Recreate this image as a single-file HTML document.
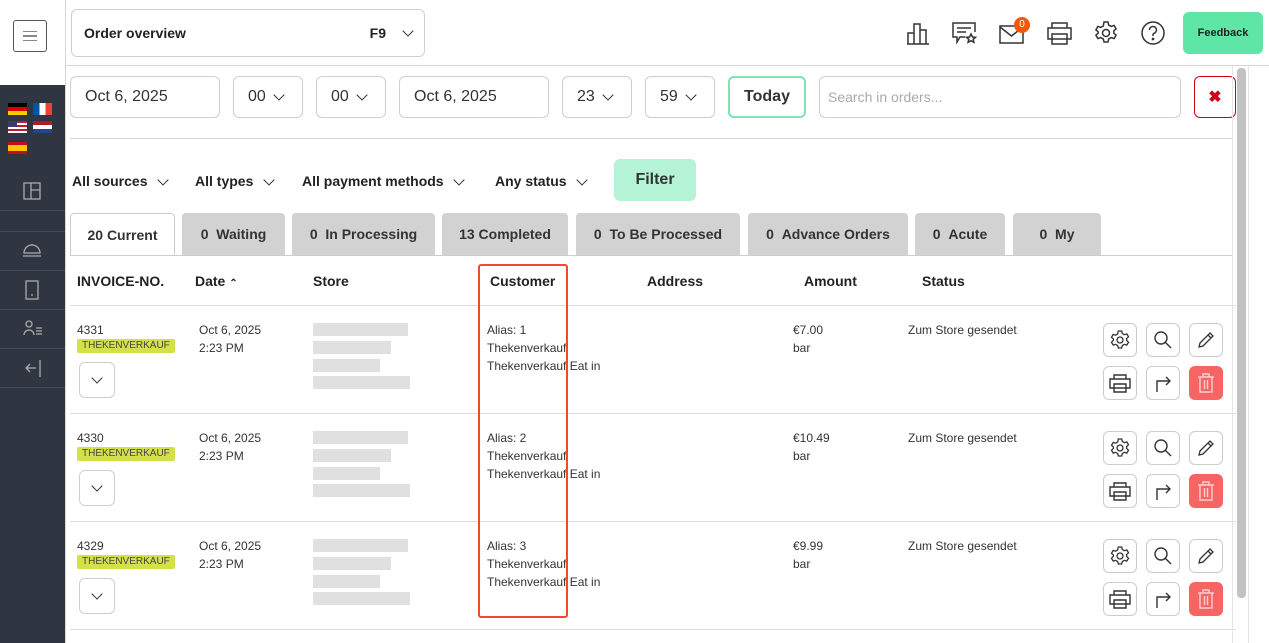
<!DOCTYPE html>
<html><head><meta charset="utf-8"><style>
*{box-sizing:border-box;margin:0;padding:0}
body{width:1269px;height:643px;overflow:hidden;background:#fff;font-family:"Liberation Sans",sans-serif;color:#222;position:relative}
.a{position:absolute}
.side{left:0;top:85px;width:65px;height:558px;background:#2f3541}
.vl{left:65px;top:0;width:1px;height:643px;background:#d6d6d6}
.box{position:absolute;border:1px solid #cfcfcf;border-radius:6px;background:#fff}
.chev{display:inline-block;width:8px;height:8px;border-right:1.6px solid #333;border-bottom:1.6px solid #333;transform:rotate(45deg)}
.inp{font-size:16px;color:#333;display:flex;align-items:center;padding-left:14px}
.flt{font-size:14px;font-weight:bold;top:173px}
.tab{position:absolute;top:213px;height:42px;background:#d2d2d2;border-radius:4px 4px 0 0;font-size:14px;font-weight:bold;display:flex;align-items:center;justify-content:center;color:#333}
.th{position:absolute;top:273px;font-size:14px;font-weight:bold;color:#222}
.hr{position:absolute;left:66px;width:1166px;height:1px;background:#dcdcdc}
.t{position:absolute;font-size:12px;line-height:18px;color:#333}
.tag{position:absolute;background:#d4e04a;color:#444;font-size:10px;padding:0 5px;height:14px;line-height:14px;border-radius:2px}
.ph{position:absolute;background:#e0e0e0;height:13px}
.btn{position:absolute;width:34px;height:34px;border:1px solid #ccc;border-radius:6px;background:#fff;display:flex;align-items:center;justify-content:center}
.del{background:#f76464;border-color:#f76464}
.sb{position:absolute;width:1px;background:#ddd}
.ic{position:absolute;top:13px}
</style></head><body>
<div class="a side"></div>
<div class="a" style="left:0;top:210px;width:65px;height:1px;background:#444b57"></div>
<div class="a" style="left:0;top:231px;width:65px;height:1px;background:#444b57"></div>
<div class="a" style="left:0;top:270px;width:65px;height:1px;background:#444b57"></div>
<div class="a" style="left:0;top:309px;width:65px;height:1px;background:#444b57"></div>
<div class="a" style="left:0;top:348px;width:65px;height:1px;background:#444b57"></div>
<div class="a" style="left:0;top:387px;width:65px;height:1px;background:#444b57"></div>
<div class="a vl"></div>
<div class="box" style="left:13px;top:20px;width:34px;height:32px;border-color:#555;border-radius:3px;display:flex;flex-direction:column;justify-content:center;align-items:center;gap:3px"><i style="display:block;width:14px;height:1.5px;background:#888"></i><i style="display:block;width:14px;height:1.5px;background:#888"></i><i style="display:block;width:14px;height:1.5px;background:#888"></i></div>
<!-- flags -->
<div class="a" style="left:8px;top:103px;width:19px;height:12px;background:linear-gradient(#000 33%,#d00 33% 66%,#fc0 66%)"></div>
<div class="a" style="left:33px;top:103px;width:19px;height:12px;background:linear-gradient(90deg,#0055a4 33%,#fff 33% 66%,#ef4135 66%)"></div>
<div class="a" style="left:8px;top:121px;width:19px;height:12px;background:repeating-linear-gradient(#b22234 0 2px,#fff 2px 4px)"><div style="width:9px;height:6px;background:#3c3b6e"></div></div>
<div class="a" style="left:33px;top:121px;width:19px;height:12px;background:linear-gradient(#ae1c28 33%,#fff 33% 66%,#21468b 66%)"></div>
<div class="a" style="left:8px;top:142px;width:19px;height:12px;background:linear-gradient(#c60b1e 25%,#ffc400 25% 75%,#c60b1e 75%)"></div>
<svg class="a" style="left:23px;top:182px" width="19" height="19" fill="none" stroke="#aaa" stroke-width="1.3"><rect x="1" y="1" width="16" height="16"/><path d="M8 1v16M8 8h9"/></svg>
<svg class="a" style="left:22px;top:241px" width="20" height="18" fill="none" stroke="#aaa" stroke-width="1.3"><path d="M2 12a8 8 0 0 1 16 0zM1 15h18M10 3v1"/></svg>
<svg class="a" style="left:25px;top:280px" width="14" height="20" fill="none" stroke="#aaa" stroke-width="1.3"><rect x="1" y="1" width="12" height="18"/><path d="M6 15h2"/></svg>
<svg class="a" style="left:23px;top:320px" width="20" height="16" fill="none" stroke="#aaa" stroke-width="1.3"><circle cx="6" cy="4" r="3"/><path d="M1 15a5 5 0 0 1 10 0M13 8h6M13 11h6M13 14h6"/></svg>
<svg class="a" style="left:24px;top:359px" width="18" height="19" fill="none" stroke="#aaa" stroke-width="1.3"><path d="M16 1v17M12 9H2M6 5L2 9l4 4"/></svg>

<!-- header -->
<div class="box" style="left:71px;top:9px;width:354px;height:48px;display:flex;align-items:center;padding:0 12px;font-size:14px;font-weight:bold"><span style="flex:1">Order overview</span><span style="margin-right:18px">F9</span><span class="chev" style="margin-top:-5px"></span></div>
<div class="a" style="left:66px;top:65px;width:1203px;height:1px;background:#d6d6d6"></div>
<svg class="a" style="left:906px;top:22px" width="24" height="23" fill="none" stroke="#333" stroke-width="1.5"><path d="M1 22h22M2 22V11h6v11M8 22V2h6v20M14 22V8h6v14"/></svg>
<svg class="a" style="left:952px;top:21px" width="26" height="24" fill="none" stroke="#333" stroke-width="1.5"><path d="M13 16H8l-3 5v-5H1V2h22v9M5 7h14M5 11h9"/><path d="M19 13l1.5 3 3 .3-2.3 2 .7 3-2.9-1.6-2.9 1.6.7-3-2.3-2 3-.3z"/></svg>
<svg class="a" style="left:999px;top:24px" width="26" height="20" fill="none" stroke="#333" stroke-width="1.5"><rect x="1" y="2" width="23" height="17"/><path d="M1 3l11.5 9L24 3"/></svg>
<div class="a" style="left:1014px;top:17px;width:16px;height:16px;border-radius:50%;background:#f05a0c;color:#fff;font-size:10px;text-align:center;line-height:16px">0</div>
<svg class="a" style="left:1047px;top:21px" width="25" height="24" fill="none" stroke="#333" stroke-width="1.5"><path d="M5 7V2h15v5M1 7h23v11H1zM5 13h15v10H5z"/></svg>
<svg class="a" style="left:1094px;top:21px" width="24" height="24" fill="none" stroke="#333" stroke-width="1.5"><circle cx="12" cy="12" r="3.5"/><path d="M10 1h4l.7 3 2.5 1.4 2.9-1 2 3.4-2.3 2v2.4l2.3 2-2 3.4-2.9-1-2.5 1.4-.7 3h-4l-.7-3-2.5-1.4-2.9 1-2-3.4 2.3-2V10.8l-2.3-2 2-3.4 2.9 1 2.5-1.4z"/></svg>
<svg class="a" style="left:1141px;top:21px" width="24" height="24" fill="none" stroke="#333" stroke-width="1.5"><circle cx="12" cy="12" r="11"/><path d="M8.5 9a3.5 3.5 0 1 1 4.5 3.3c-.7.3-1 .8-1 1.7v1"/><circle cx="12" cy="18" r=".6" fill="#333"/></svg>
<div class="a" style="left:1183px;top:12px;width:80px;height:42px;background:#5ee6a6;border-radius:6px;font-size:11px;font-weight:bold;display:flex;align-items:center;justify-content:center;color:#222">Feedback</div>

<!-- date row -->
<div class="box inp" style="left:70px;top:76px;width:150px;height:42px">Oct 6, 2025</div>
<div class="box inp" style="left:233px;top:76px;width:70px;height:42px">00&nbsp;&nbsp;<span class="chev" style="margin-top:-5px"></span></div>
<div class="box inp" style="left:316px;top:76px;width:70px;height:42px">00&nbsp;&nbsp;<span class="chev" style="margin-top:-5px"></span></div>
<div class="box inp" style="left:399px;top:76px;width:150px;height:42px">Oct 6, 2025</div>
<div class="box inp" style="left:562px;top:76px;width:70px;height:42px">23&nbsp;&nbsp;<span class="chev" style="margin-top:-5px"></span></div>
<div class="box inp" style="left:645px;top:76px;width:70px;height:42px">59&nbsp;&nbsp;<span class="chev" style="margin-top:-5px"></span></div>
<div class="box" style="left:728px;top:76px;width:78px;height:42px;border:2px solid #7fe3b5;font-size:16px;font-weight:bold;display:flex;align-items:center;justify-content:center;color:#333">Today</div>
<div class="box" style="left:819px;top:76px;width:362px;height:42px;font-size:14px;color:#aaa;padding:12px 0 0 8px">Search in orders...</div>
<div class="box" style="left:1194px;top:76px;width:42px;height:42px;border-color:#d0021b;color:#d0021b;font-size:16px;font-weight:bold;display:flex;align-items:center;justify-content:center">✖</div>
<div class="a" style="left:70px;top:138px;width:1162px;height:1px;background:#d6d6d6"></div>

<!-- filters -->
<div class="a flt" style="left:72px">All sources &nbsp;&nbsp;<span class="chev" style="margin-bottom:2px"></span></div>
<div class="a flt" style="left:195px">All types &nbsp;&nbsp;<span class="chev" style="margin-bottom:2px"></span></div>
<div class="a flt" style="left:302px">All payment methods &nbsp;&nbsp;<span class="chev" style="margin-bottom:2px"></span></div>
<div class="a flt" style="left:495px">Any status &nbsp;&nbsp;<span class="chev" style="margin-bottom:2px"></span></div>
<div class="a" style="left:614px;top:159px;width:82px;height:42px;background:#b5f3d6;border-radius:6px;font-size:16px;font-weight:bold;display:flex;align-items:center;justify-content:center;color:#333">Filter</div>

<!-- tabs -->
<div class="tab" style="left:70px;width:105px;background:#fff;border:1px solid #ccc;border-bottom:none">20 Current</div>
<div class="tab" style="left:182px;width:103px">0&nbsp;&nbsp;Waiting</div>
<div class="tab" style="left:292px;width:143px">0&nbsp;&nbsp;In Processing</div>
<div class="tab" style="left:442px;width:126px">13&nbsp;Completed</div>
<div class="tab" style="left:576px;width:164px">0&nbsp;&nbsp;To Be Processed</div>
<div class="tab" style="left:748px;width:160px">0&nbsp;&nbsp;Advance Orders</div>
<div class="tab" style="left:915px;width:90px">0&nbsp;&nbsp;Acute</div>
<div class="tab" style="left:1013px;width:88px">0&nbsp;&nbsp;My</div>
<div class="hr" style="top:255px;left:70px;width:1162px;background:#ccc"></div>

<!-- table head -->
<div class="th" style="left:77px">INVOICE-NO.</div>
<div class="th" style="left:195px">Date <span style="font-size:10px">&#8963;</span></div>
<div class="th" style="left:313px">Store</div>
<div class="th" style="left:490px">Customer</div>
<div class="th" style="left:647px">Address</div>
<div class="th" style="left:804px">Amount</div>
<div class="th" style="left:922px">Status</div>
<div class="hr" style="top:305px;left:70px"></div>
<div class="hr" style="top:413px;left:70px"></div>
<div class="hr" style="top:521px;left:70px"></div>
<div class="hr" style="top:629px;left:70px"></div>

<!-- rows -->
<div id="rows"></div>
<script>
var d=[["4331","1","€7.00"],["4330","2","€10.49"],["4329","3","€9.99"]];
var h="";
d.forEach(function(r,i){var y=321+i*108;
h+='<div class="t" style="left:77px;top:'+y+'px">'+r[0]+'</div>';
h+='<div class="tag" style="left:77px;top:'+(y+18)+'px">THEKENVERKAUF</div>';
h+='<div class="box" style="left:79px;top:'+(y+41)+'px;width:36px;height:36px;display:flex;align-items:center;justify-content:center"><span class="chev" style="margin-top:-4px"></span></div>';
h+='<div class="t" style="left:199px;top:'+y+'px">Oct 6, 2025<br>2:23 PM</div>';
h+='<div class="ph" style="left:313px;top:'+(y+2)+'px;width:95px"></div><div class="ph" style="left:313px;top:'+(y+20)+'px;width:78px"></div><div class="ph" style="left:313px;top:'+(y+38)+'px;width:67px"></div><div class="ph" style="left:313px;top:'+(y+55)+'px;width:97px"></div>';
h+='<div class="t" style="left:487px;top:'+y+'px">Alias: '+r[1]+'<br>Thekenverkauf<br>Thekenverkauf Eat in</div>';
h+='<div class="t" style="left:793px;top:'+y+'px">'+r[2]+'<br>bar</div>';
h+='<div class="t" style="left:908px;top:'+y+'px">Zum Store gesendet</div>';
var b1=y+2,b2=y+45;
h+='<div class="btn" style="left:1103px;top:'+b1+'px"><svg width="20" height="20" fill="none" stroke="#333" stroke-width="1.3"><circle cx="10" cy="10" r="3"/><path d="M8.3 1h3.4l.6 2.5 2.1 1.2 2.4-.8 1.7 2.9-1.9 1.7v2l1.9 1.7-1.7 2.9-2.4-.8-2.1 1.2-.6 2.5H8.3l-.6-2.5-2.1-1.2-2.4.8-1.7-2.9 1.9-1.7V9L1.5 7.3l1.7-2.9 2.4.8 2.1-1.2z"/></svg></div>';
h+='<div class="btn" style="left:1146px;top:'+b1+'px"><svg width="20" height="20" fill="none" stroke="#333" stroke-width="1.4"><circle cx="8" cy="8" r="6"/><path d="M12.5 12.5L18 18"/></svg></div>';
h+='<div class="btn" style="left:1189px;top:'+b1+'px"><svg width="20" height="20" fill="none" stroke="#333" stroke-width="1.3"><path d="M3 17l1-4L14 3l3 3L7 16zM12 5l3 3"/></svg></div>';
h+='<div class="btn" style="left:1103px;top:'+b2+'px"><svg width="22" height="20" fill="none" stroke="#333" stroke-width="1.4"><path d="M5 6V2h12v4M1 6h20v9H1zM5 11h12v8H5z"/></svg></div>';
h+='<div class="btn" style="left:1146px;top:'+b2+'px"><svg width="20" height="20" fill="none" stroke="#333" stroke-width="1.4"><path d="M4 19V8h13M13 4l4 4-4 4"/></svg></div>';
h+='<div class="btn del" style="left:1189px;top:'+b2+'px"><svg width="18" height="20" fill="none" stroke="#fbd0d0" stroke-width="1.4"><path d="M1 4h16M6 4V1h6v3M3 4v15h12V4M7.5 7v9M10.5 7v9"/></svg></div>';
});
document.getElementById("rows").innerHTML=h;
</script>
<!-- highlight -->
<div class="a" style="left:478px;top:264px;width:90px;height:354px;border:2px solid #ee4a2d;border-radius:3px"></div>
<!-- scrollbar -->
<div class="a" style="left:1232px;top:66px;width:1px;height:577px;background:#e5e5e5"></div>
<div class="a" style="left:1237px;top:68px;width:9px;height:530px;background:#c2c2c2;border-radius:4px"></div>
<div class="a" style="left:1248px;top:66px;width:1px;height:577px;background:#e5e5e5"></div>
</body></html>
